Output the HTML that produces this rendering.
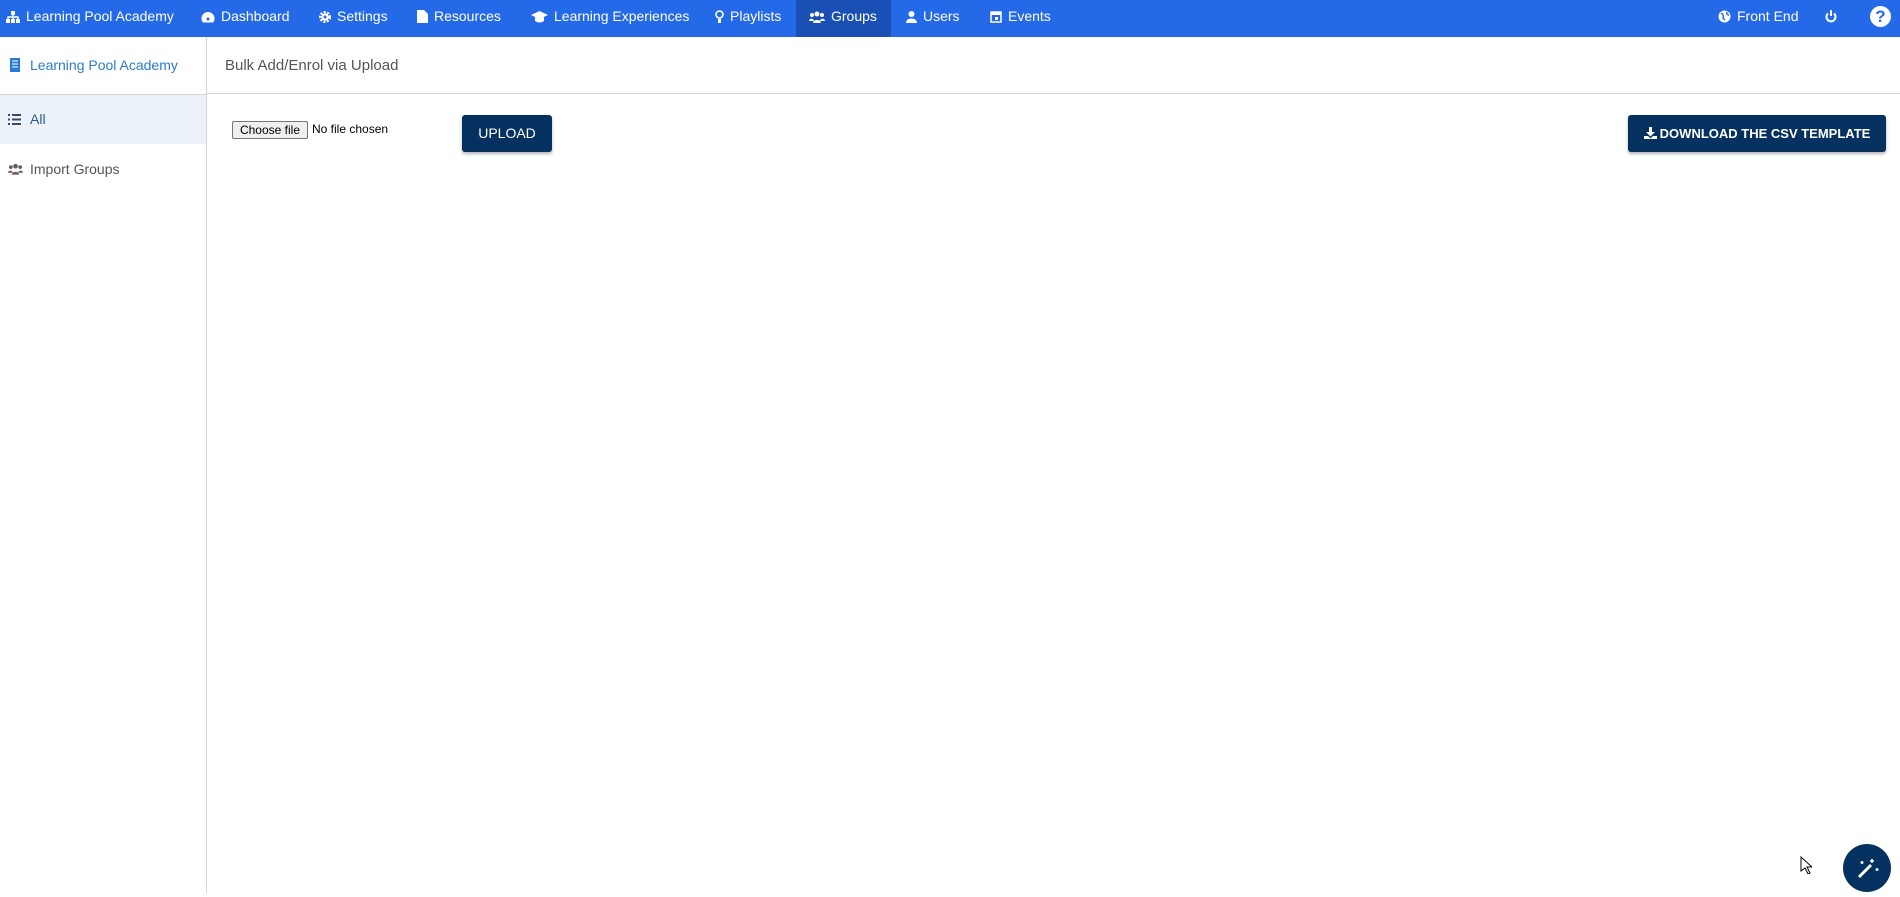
<!DOCTYPE html>
<html><head><meta charset="utf-8"><style>
*{margin:0;padding:0;box-sizing:border-box}
body{width:1900px;height:893px;overflow:hidden;background:#fff;font-family:"Liberation Sans",Arial,sans-serif;position:relative}
.nav{position:absolute;left:0;top:0;width:1900px;height:37px;background:#2469e8}
.act{position:absolute;left:796px;top:0;width:95px;height:37px;background:#1a4fb3}
.ni{position:absolute;top:0;height:37px;line-height:33px;color:#fff;font-size:14px;white-space:nowrap}
.ni svg{vertical-align:-2px;margin-right:6px}
.side{position:absolute;left:0;top:37px;width:207px;height:856px;border-right:1px solid #d5d5d5}
.hdr{position:absolute;left:207px;top:37px;right:0;height:57px;border-bottom:1px solid #d0d0d0}
.btn{position:absolute;background:#04315f;color:#fff;border-radius:3px;font-size:14px;text-align:center;line-height:37px;box-shadow:0 2px 3px rgba(0,0,0,.3)}
</style></head><body>
<div class="nav"></div><div class="act"></div>
<div class="ni" style="left:6px"><svg width="14" height="12" viewBox="0 0 14 12"><rect x="5" y="0" width="4" height="4" fill="#fff"/><rect x="0" y="8" width="4" height="4" fill="#fff"/><rect x="5" y="8" width="4" height="4" fill="#fff"/><rect x="10" y="8" width="4" height="4" fill="#fff"/><path d="M2 8V6h10v2M7 4v4" stroke="#fff" fill="none" stroke-width="1.4"/></svg>Learning Pool Academy</div>
<div class="ni" style="left:201px"><svg width="14" height="12" viewBox="0 0 14 12"><path d="M7 1a6.5 6.5 0 0 0-6.5 6.5c0 1.5.5 3 1.5 4h10c1-1 1.5-2.5 1.5-4A6.5 6.5 0 0 0 7 1z" fill="#fff"/><circle cx="7" cy="8" r="1.5" fill="#2469e8"/></svg>Dashboard</div>
<div class="ni" style="left:319px"><svg width="12" height="12" viewBox="0 0 12 12"><circle cx="6" cy="6" r="4.5" fill="none" stroke="#fff" stroke-width="3" stroke-dasharray="2 1.3"/><circle cx="6" cy="6" r="3.5" fill="#fff"/><circle cx="6" cy="6" r="1.5" fill="#2469e8"/></svg>Settings</div>
<div class="ni" style="left:417px"><svg width="11" height="13" viewBox="0 0 11 13"><path d="M0 0h7l4 4v9H0z" fill="#fff"/></svg>Resources</div>
<div class="ni" style="left:531px"><svg width="17" height="12" viewBox="0 0 17 12"><path d="M0 4l8.5-4L17 4l-8.5 4z M4 6v4c3 2 6 2 9 0V6l-4.5 2z" fill="#fff"/></svg>Learning Experiences</div>
<div class="ni" style="left:715px"><svg width="9" height="13" viewBox="0 0 9 13"><circle cx="4.5" cy="4.5" r="3.5" fill="none" stroke="#fff" stroke-width="1.6"/><rect x="3" y="9" width="3" height="4" fill="#fff"/></svg>Playlists</div>
<div class="ni" style="left:809px"><svg width="16" height="12" viewBox="0 0 16 12"><circle cx="8" cy="3" r="2.5" fill="#fff"/><circle cx="3" cy="4" r="2" fill="#fff"/><circle cx="13" cy="4" r="2" fill="#fff"/><path d="M4 12c0-4 8-4 8 0zM0 10c0-3 5-3 5 0zM11 10c0-3 5-3 5 0z" fill="#fff"/></svg>Groups</div>
<div class="ni" style="left:906px"><svg width="11" height="12" viewBox="0 0 11 12"><circle cx="5.5" cy="3" r="3" fill="#fff"/><path d="M0 12c0-6 11-6 11 0z" fill="#fff"/></svg>Users</div>
<div class="ni" style="left:990px"><svg width="12" height="13" viewBox="0 0 12 13"><rect x="1" y="2" width="10" height="10" fill="none" stroke="#fff" stroke-width="1.5"/><rect x="1" y="2" width="10" height="3" fill="#fff"/><rect x="5" y="7" width="3" height="3" fill="#fff"/></svg>Events</div>
<div class="ni" style="left:1718px"><svg width="13" height="13" viewBox="0 0 13 13"><circle cx="6.5" cy="6.5" r="6" fill="#fff"/><path d="M3 3c2 1 3 3 2 5l2 2M9 2c-1 2 1 3 2 3" stroke="#2469e8" stroke-width="1.5" fill="none"/></svg>Front End</div>
<div class="ni" style="left:1825px"><svg width="12" height="13" viewBox="0 0 12 13"><path d="M3 3.5a4.5 4.5 0 1 0 6 0" stroke="#fff" stroke-width="2" fill="none"/><path d="M6 0v6" stroke="#fff" stroke-width="2"/></svg></div>
<div class="ni" style="left:1870px;top:6px;height:24px;line-height:24px"><div style="width:21px;height:21px;border-radius:50%;background:#fff;color:#2469e8;font-weight:bold;font-size:17px;text-align:center;line-height:21px">?</div></div>

<div class="side">
<div style="position:absolute;left:10px;top:20px;font-size:14px;color:#2a7bd0;white-space:nowrap"><svg width="10" height="14" viewBox="0 0 10 14" style="vertical-align:-2px;margin-right:10px"><rect width="10" height="14" fill="#2a7bd0"/><path d="M2 3h6M2 6h6M2 9h6" stroke="#fff" stroke-width="1"/></svg>Learning Pool Academy</div>
<div style="position:absolute;left:0;top:57px;width:206px;height:50px;background:#ebf2fa;border-top:1px solid #d5d5d5"></div>
<div style="position:absolute;left:8px;top:74px;font-size:14px;color:#2a5a90"><svg width="13" height="11" viewBox="0 0 13 11" style="vertical-align:-1px;margin-right:9px"><path d="M0 1h2M4 1h9M0 5.5h2M4 5.5h9M0 10h2M4 10h9" stroke="#3a4a66" stroke-width="2"/></svg>All</div>
<div style="position:absolute;left:8px;top:124px;font-size:14px;color:#555"><svg width="15" height="12" viewBox="0 0 16 12" style="vertical-align:-1px;margin-right:7px"><circle cx="8" cy="3" r="2.5" fill="#6a5a66"/><circle cx="3" cy="4" r="2" fill="#6a5a66"/><circle cx="13" cy="4" r="2" fill="#6a5a66"/><path d="M4 12c0-4 8-4 8 0zM0 10c0-3 5-3 5 0zM11 10c0-3 5-3 5 0z" fill="#6a5a66"/></svg>Import Groups</div>
</div>
<div class="hdr"><div style="position:absolute;left:18px;top:20px;font-size:15px;color:#555">Bulk Add/Enrol via Upload</div></div>

<div style="position:absolute;left:232px;top:121px;width:76px;height:18px;border:1px solid #767676;border-radius:2px;background:#efefef;font-size:12px;line-height:16px;text-align:center;color:#000">Choose file</div>
<div style="position:absolute;left:312px;top:122px;font-size:12px;color:#000">No file chosen</div>
<div class="btn" style="left:462px;top:115px;width:90px;height:37px">UPLOAD</div>
<div class="btn" style="left:1628px;top:115px;width:258px;height:37px;font-weight:bold;font-size:13px"><svg width="13" height="12" viewBox="0 0 13 12" style="vertical-align:-1px;margin-right:3px"><path d="M5 0h3v5h3L6.5 9.5 2 5h3z M0 9h4l2.5 2.5L9 9h4v3H0z" fill="#fff"/></svg>DOWNLOAD THE CSV TEMPLATE</div>

<div style="position:absolute;left:1843px;top:844px;width:48px;height:48px;border-radius:50%;background:#04315f"><svg width="48" height="48" viewBox="0 0 48 48"><path d="M16 33l12-12" stroke="#fff" stroke-width="3"/><path d="M29 15v4M27 17h4M34 24v3M32.5 25.5h3M19 17v3M17.5 18.5h3" stroke="#fff" stroke-width="1.5"/></svg></div>
<svg style="position:absolute;left:1800px;top:856px" width="12" height="18" viewBox="0 0 12 18"><path d="M1 1v14l4-3 3 6 2-1-3-6h5z" fill="#fff" stroke="#000"/></svg>
</body></html>
